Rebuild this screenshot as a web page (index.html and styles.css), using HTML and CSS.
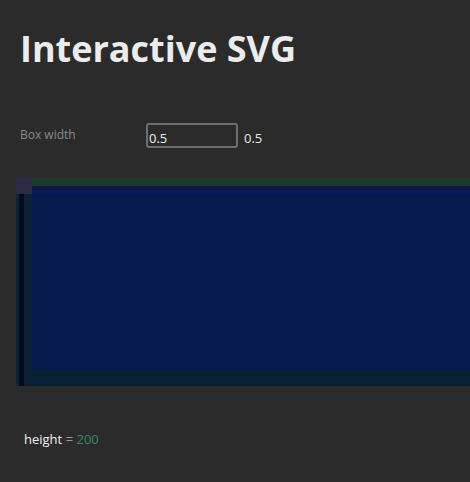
FILE: index.html
```html
<!DOCTYPE html>
<html>
<head>
<meta charset="utf-8">
<link rel="stylesheet" href="styles.css">
</head>
<body>
<div class="page">
  <h1 class="title">Interactive SVG</h1>
  <div class="control">
    <label class="label">Box width</label>
    <input class="input" type="text" value="0.5">
    <span class="value">0.5</span>
  </div>
  <div class="canvas">
    <svg width="454" height="208" viewBox="0 0 454 208">
      <rect x="0" y="0" width="454" height="208" fill="#0a2236"/>
      <rect x="0" y="0" width="454" height="8" fill="#1b3a2b"/>
      <rect x="0" y="0" width="16" height="16" fill="#2d2a48"/>
      <rect x="16" y="8" width="438" height="4" fill="#0b1a42"/>
      <rect x="16" y="12" width="438" height="4" fill="#0a1a5a"/>
      <rect x="16" y="16" width="438" height="176" fill="#081b4e"/>
      <rect x="3" y="16" width="5" height="192" fill="#050a1e"/>
      <rect x="0" y="16" width="3" height="192" fill="#0a2535"/>
      <rect x="8" y="16" width="8" height="192" fill="#0a2235"/>
    </svg>
  </div>
  <div class="readout"><span class="key">height</span> <span class="eq">=</span> <span class="num">200</span></div>
</div>
</body>
</html>
```
FILE: styles.css
```css
html, body {
  margin: 0;
  padding: 0;
  background: #2b2b2b;
  overflow: hidden;
}
.page {
  padding: 0 0 0 20px;
  font-family: "Open Sans", "Liberation Sans", sans-serif;
  color: #eee;
}
.title {
  margin: 0;
  padding-top: 24px;
  font-size: 36px;
  font-weight: 700;
  color: #ececec;
  line-height: 50px;
  letter-spacing: 0;
}
.control {
  display: flex;
  align-items: center;
  margin-top: 48px;
  height: 26px;
}
.label {
  width: 126px;
  font-size: 12px;
  color: #8a8a8a;
  align-self: flex-start;
  margin-top: 4px;
}
.input {
  box-sizing: border-box;
  width: 92px;
  height: 25px;
  background: #2b2b2b;
  border: 2px solid #6e6e6e;
  border-radius: 3px;
  color: #f2f2f2;
  font-family: "Open Sans", "Liberation Sans", sans-serif;
  font-size: 13px;
  padding: 5px 1px 0;
  margin: 0;
  outline: none;
}
.value {
  margin-left: 6px;
  font-size: 13px;
  color: #e8e8e8;
  margin-top: 6px;
}
.canvas {
  margin-top: 30px;
  margin-left: -4px;
  height: 208px;
  line-height: 0;
}
.canvas svg {
  display: block;
}
.readout {
  margin-top: 44px;
  margin-left: 4px;
  font-size: 13px;
}
.key { color: #f0f0f0; }
.eq { color: #9a9a9a; }
.num { color: #2f8f62; }
```
